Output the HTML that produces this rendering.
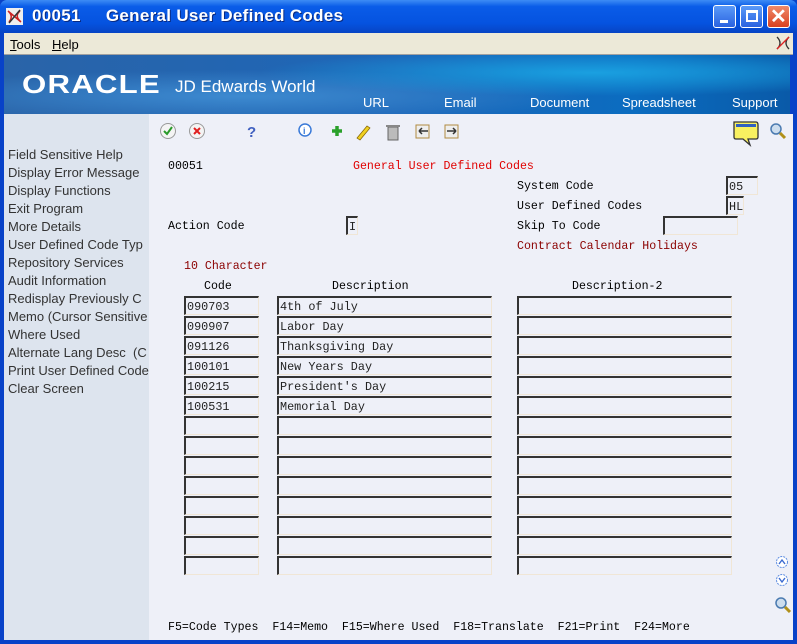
<!DOCTYPE html>
<html><head><meta charset="utf-8"><style>
*{margin:0;padding:0;box-sizing:border-box}
body{width:797px;height:644px;overflow:hidden;background:#0842c8;font-family:"Liberation Sans",sans-serif;position:relative}
.abs{position:absolute}
#title{left:0;top:0;width:797px;height:33px;background:linear-gradient(#3d8cf5,#0a5ce8 20%,#0553e0 70%,#0644c4);border-radius:7px 7px 0 0}
#title .t{left:32px;top:6px;color:#fff;font:bold 17px "Liberation Sans",sans-serif;letter-spacing:0.3px;text-shadow:1px 1px #0a2a80}
.wb{top:5px;width:23px;height:23px;border:1px solid #fff;border-radius:3px;background:linear-gradient(#5a9af8,#2a62e0)}
#menu{left:4px;top:33px;width:789px;height:22px;background:#ece9d8;border-bottom:1px solid #a0a0a0;font-size:13px}
#banner{left:4px;top:55px;width:786px;height:59px;background:radial-gradient(ellipse at 75% 30%,#1aa0e0,transparent 40%),radial-gradient(ellipse at 30% 70%,#3d8ad0,transparent 45%),linear-gradient(90deg,#2a64a8,#1d66b8 50%,#0b6cc0 80%,#0a5aa8)}
#banner .n{color:#fff;font-size:13px;top:40px}
#side{left:4px;top:114px;width:145px;height:526px;background:#dde4ee}
#side div{height:18px;font-size:13px;color:#333;white-space:nowrap;overflow:hidden;padding-left:4px;line-height:18px}
#main{left:149px;top:114px;width:644px;height:526px;background:#eef0f8}
.m{font-family:"Liberation Mono",monospace;font-size:11.6px;color:#000;white-space:pre;position:absolute}
.r{color:#e00000}.dr{color:#8b0000}
.f{position:absolute;height:19px;border-top:2px solid #333;border-left:2px solid #333;border-right:1px solid #f0e6d6;border-bottom:1px solid #f0e6d6;font-family:"Liberation Mono",monospace;font-size:11.8px;line-height:15px;padding-left:1px;padding-top:2px;color:#222;white-space:pre;overflow:hidden}
#fr{right:0;top:33px;width:4px;height:611px;background:#0842c8}
</style></head><body>
<div id="title" class="abs">
<svg class="abs" style="left:6px;top:8px" width="17" height="17"><rect width="17" height="17" fill="#eee"/><path d="M2 3 Q8 8 3 14 M14 3 Q8 8 15 14 M2 3 L15 14" stroke="#c22" stroke-width="1.5" fill="none"/><path d="M14 2 L3 15" stroke="#333" stroke-width="1.5"/></svg>
<div class="abs t">00051&nbsp;&nbsp;&nbsp;&nbsp;&nbsp;General User Defined Codes</div>
<div class="abs wb" style="left:713px"><div class="abs" style="left:6px;top:14px;width:8px;height:3px;background:#fff"></div></div>
<div class="abs wb" style="left:740px"><div class="abs" style="left:5px;top:4px;width:12px;height:12px;border:2px solid #fff;border-top-width:3px"></div></div>
<div class="abs wb" style="left:767px;background:linear-gradient(#f08a6a,#d84020)"><div class="abs" style="left:2px;top:-2px;color:#fff;font:bold 20px 'Liberation Sans'">✕</div></div>
</div>
<div id="menu" class="abs"><span class="abs" style="left:6px;top:4px"><u>T</u>ools</span><span class="abs" style="left:48px;top:4px"><u>H</u>elp</span>
<svg class="abs" style="left:771px;top:2px" width="16" height="16"><path d="M2 2 Q8 8 2 14 M14 2 Q8 8 14 14" stroke="#333" fill="none" stroke-width="1.3"/><path d="M2 14 L14 2" stroke="#d22" stroke-width="1.3"/></svg></div>
<div id="banner" class="abs">
<div class="abs" style="left:18px;top:14px;color:#fff;font:bold 26px 'Liberation Sans';letter-spacing:1px;transform:scaleX(1.2);transform-origin:left">ORACLE</div>
<div class="abs" style="left:171px;top:22px;color:#fff;font-size:17px">JD Edwards World</div>
<div class="abs n" style="left:359px">URL</div><div class="abs n" style="left:440px">Email</div><div class="abs n" style="left:526px">Document</div><div class="abs n" style="left:618px">Spreadsheet</div><div class="abs n" style="left:728px">Support</div>
</div>
<div id="side" class="abs"><div style="height:32px"></div>
<div>Field Sensitive Help</div><div>Display Error Message</div><div>Display Functions</div><div>Exit Program</div><div>More Details</div><div>User Defined Code Typ</div><div>Repository Services</div><div>Audit Information</div><div>Redisplay Previously C</div><div>Memo (Cursor Sensitive</div><div>Where Used</div><div>Alternate Lang Desc&nbsp; (C</div><div>Print User Defined Code</div><div>Clear Screen</div></div>
<div id="main" class="abs">
<svg class="abs" style="left:10px;top:8px" width="260" height="20">
<circle cx="9" cy="9" r="7.5" fill="#f4f4f4" stroke="#999"/><path d="M5 9 L8 12 L13 5" stroke="#2a9a2a" stroke-width="2" fill="none"/>
<circle cx="38" cy="9" r="7.5" fill="#f4f4f4" stroke="#999"/><path d="M35 6 L41 12 M41 6 L35 12" stroke="#e02020" stroke-width="2"/>
<text x="88" y="15" font-family="Liberation Sans" font-weight="bold" font-size="15" fill="#4060c0">?</text>
<circle cx="146" cy="8" r="6" fill="#fff" stroke="#3a7ad8" stroke-width="1.5"/><text x="144" y="12" font-size="9" font-weight="bold" fill="#3a7ad8">i</text>
<path d="M173 9 H183 M178 4 V14" stroke="#2aa02a" stroke-width="3.5"/>
<path d="M198 16 L208 4 L211 6 L201 18 Z" fill="#f0d020" stroke="#806000" stroke-width=".7"/>
<rect x="229" y="5" width="10" height="13" fill="#bbb" stroke="#666"/><rect x="227" y="3" width="14" height="2" fill="#888"/>
</svg>
<svg class="abs" style="left:265px;top:9px" width="50" height="18"><rect x="2" y="2" width="13" height="13" fill="#eee" stroke="#b08a40"/><path d="M5 8 H14 M5 8 L8 5 M5 8 L8 11" stroke="#333" stroke-width="1.5" fill="none"/><rect x="31" y="2" width="13" height="13" fill="#eee" stroke="#b08a40"/><path d="M33 8 H42 M42 8 L39 5 M42 8 L39 11" stroke="#333" stroke-width="1.5" fill="none"/></svg>
<svg class="abs" style="left:582px;top:5px" width="60" height="28"><path d="M3 3 H25 Q27 3 27 6 V18 Q27 20 25 20 H17 L19 26 L12 20 H5 Q3 20 3 18 Z" fill="#f8f060" stroke="#333" stroke-width="1.3"/><rect x="5" y="5" width="20" height="3" fill="#3060c0"/><circle cx="45" cy="10" r="5" fill="#cde" stroke="#4a7ab0" stroke-width="1.5"/><path d="M49 14 L54 19" stroke="#b0901a" stroke-width="3"/></svg>
<div class="m" style="left:19px;top:46px">00051</div>
<div class="m r" style="left:204px;top:46px">General User Defined Codes</div>
<div class="m" style="left:368px;top:66px">System Code</div>
<div class="m" style="left:368px;top:86px">User Defined Codes</div>
<div class="m" style="left:19px;top:106px">Action Code</div>
<div class="m" style="left:368px;top:106px">Skip To Code</div>
<div class="m dr" style="left:368px;top:126px">Contract Calendar Holidays</div>
<div class="m dr" style="left:35px;top:146px">10 Character</div>
<div class="m" style="left:55px;top:166px">Code</div>
<div class="m" style="left:183px;top:166px">Description</div>
<div class="m" style="left:423px;top:166px">Description-2</div>
<div class="f" style="left:577px;top:62px;width:32px">05</div>
<div class="f" style="left:577px;top:82px;width:18px">HL</div>
<div class="f" style="left:197px;top:102px;width:12px">I</div>
<div class="f" style="left:514px;top:102px;width:75px"></div>
<div id="rows"></div>
<svg class="abs" style="left:625px;top:440px" width="18" height="60"><circle cx="8" cy="8" r="5.5" fill="#fff" stroke="#5a8ae0" stroke-dasharray="2 1"/><path d="M5 10 L8 6 L11 10" stroke="#3a6ad0" fill="none" stroke-width="1.4"/><circle cx="8" cy="26" r="5.5" fill="#fff" stroke="#5a8ae0" stroke-dasharray="2 1"/><path d="M5 24 L8 28 L11 24" stroke="#3a6ad0" fill="none" stroke-width="1.4"/><circle cx="7" cy="49" r="5" fill="#cde" stroke="#4a7ab0" stroke-width="1.5"/><path d="M11 53 L16 58" stroke="#b0901a" stroke-width="3"/></svg>
<div class="m" style="left:19px;top:507px">F5=Code Types  F14=Memo  F15=Where Used  F18=Translate  F21=Print  F24=More</div>
</div>
<div id="fr" class="abs"></div>
<script>
var d=[["090703","4th of July"],["090907","Labor Day"],["091126","Thanksgiving Day"],["100101","New Years Day"],["100215","President's Day"],["100531","Memorial Day"]];
var h="";for(var i=0;i<14;i++){var t=182+i*20,r=d[i]||["",""];
h+='<div class="f" style="left:35px;top:'+t+'px;width:75px">'+r[0]+'</div><div class="f" style="left:128px;top:'+t+'px;width:215px">'+r[1]+'</div><div class="f" style="left:368px;top:'+t+'px;width:215px"></div>';}
document.getElementById("rows").outerHTML=h;
</script>
</body></html>
